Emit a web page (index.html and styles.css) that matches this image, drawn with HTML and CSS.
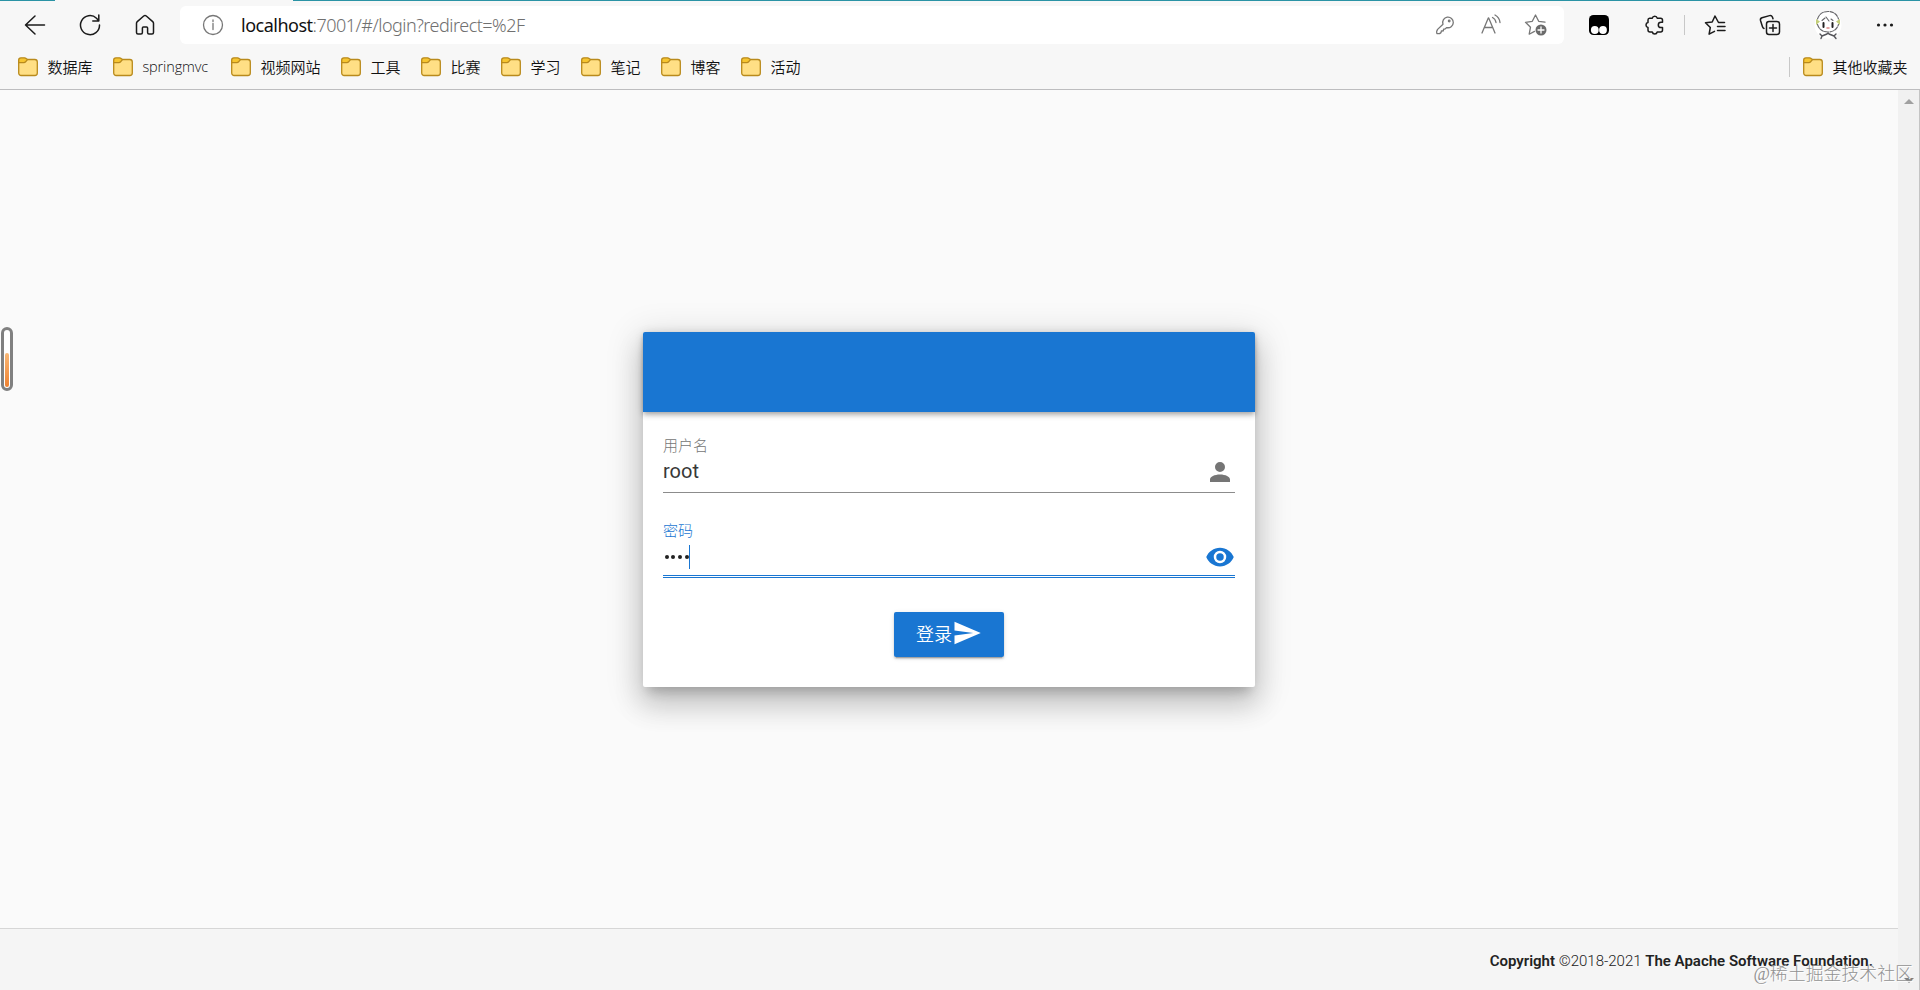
FILE: index.html
```html
<!DOCTYPE html>
<html lang="zh">
<head>
<meta charset="utf-8">
<title>Login</title>
<link rel="stylesheet" href="styles.css">
</head>
<body>
<svg class="defs" width="0" height="0">
  <symbol id="folder" viewBox="0 0 20 20">
    <rect x="0.7" y="2.5" width="18.6" height="16" rx="2.5" fill="#ffdf85" stroke="#b98a1c" stroke-width="1.3"/>
    <path d="M.7 5.600V3q0-2.200 2.200-2.200H6.500q1 0 1.600.700L9.400 2.600 7.600 4.800q-.700.800-1.700.800z" fill="#f6c531" stroke="#b98a1c" stroke-width="1.3"/>
  </symbol>
</svg>
<div class="chrome">
  <div class="tab-strip"><i class="active-tab"></i></div>
  <div class="toolbar">
    <svg class="back" width="22" height="22" viewBox="0 0 22 22"><path d="M20.500 11H1.500M11 2L1.500 11l9.500 9"/></svg>
    <svg class="reload" width="22" height="22" viewBox="0 0 22 22"><path d="M20.500 11A9.500 9.500 0 1 1 17.500 4.200L19.500 6.500M19.800 1v6h-6"/></svg>
    <svg class="home" width="22" height="22" viewBox="0 0 22 22"><path d="M2.500 9.300q0-1 .8-1.700L9.700 2q1.300-1 2.600 0l6.400 5.600q.8.700.8 1.700v9.200q0 1.500-1.500 1.500h-3q-1.400 0-1.400-1.500V14q0-1-1-1H9.400q-1 0-1 1v4.500Q8.400 20 7 20H4q-1.500 0-1.500-1.500z"/></svg>
    <div class="address">
      <svg class="info" width="22" height="22" viewBox="0 0 22 22"><circle cx="11" cy="11" r="9.500"/><path d="M11 9.500v6M11 6v1.500"/></svg>
      <div class="url"><b>localhost</b>:7001/#/login?redirect=%2F</div>
      <svg class="key" width="20" height="20" viewBox="0 0 20 20"><path d="M2.600 14.400L8 9.200A5.300 5.300 0 1 1 11.800 12.600L10 14 8.600 14.100 8.300 15.800 6.400 16 6 17.600 4.600 18.600H2.400Q1.700 18.600 1.700 17.600V16.300z"/><circle cx="14.200" cy="6" r=".8"/></svg>
      <svg class="read" width="22" height="22" viewBox="0 0 22 22"><path d="M2 19L8.300 4h.4L15 19M4.200 13.500h8.600M12.500 3.500q3 1.500 3.500 5M15 1q4.500 2.500 5 7.500"/></svg>
      <svg class="fav" width="24" height="24" viewBox="0 0 24 24"><path d="M21 9.200l-6.300-.9L11.500 2 8.300 8.300l-6.800 1 5 4.900-1.300 7 5.300-2.800"/><circle class="plus-bg" cx="17" cy="17" r="5.500"/><path class="plus" d="M17 14v6M14 17h6"/></svg>
    </div>
    <svg class="ext" width="20" height="20" viewBox="0 0 20 20"><rect width="20" height="20" rx="4.500"/><g class="eyes"><circle cx="5.800" cy="15" r="3.900"/><circle cx="14" cy="15" r="3.900"/></g></svg>
    <svg class="puzzle" width="22" height="22" viewBox="0 0 22 22"><path d="M5.500 4.200H8.300A2.500 2.500 0 0 1 13.200 4.200H16.500Q18.500 4.200 18.500 6.200V8.200H17A2.600 2.600 0 0 0 17 13.600H18.500V16Q18.500 18 16.500 18H13.200A2.500 2.500 0 0 1 8.300 18H6Q4 18 4 16V13.400A2.500 2.500 0 0 1 4 8.500V6Q4 4.200 5.500 4.200z"/></svg>
    <i class="divider"></i>
    <svg class="favorites" width="22" height="22" viewBox="0 0 22 22"><path d="M20.500 8.500h-6L11 2 8.200 8 1.500 8.800l4.800 4.700-1.200 6.700 5.400-2.900M13.500 12.500h7.500M13.500 16.500h7.500"/></svg>
    <svg class="collections" width="22" height="22" viewBox="0 0 22 22"><rect x="7.500" y="7.500" width="13" height="13" rx="2.500"/><path d="M14 10.500v7M10.500 14h7M5 14.500Q3.800 14 3.400 12.500L1.500 6.500Q1 4.500 3 3.800L10.500 1.600Q12.500 1 13.400 3L14 4.700"/></svg>
    <svg class="avatar" width="28" height="30" viewBox="0 0 28 30"><circle cx="14" cy="15" r="13.500" fill="#fff"/><g fill="none" stroke="#66666a" stroke-width="1.100"><path d="M3.500 9Q6 1.500 14 1.500T24.500 9M3.500 14.500Q6 22 14 22T24.500 14.500" stroke-dasharray="4 1.200"/><path d="M8 10.500l3-2.500M12 7l3 4M17 9l2 1.500"/></g><path d="M2 9l4 2.500L2 15zM26 9l-4 2.500 4 3.500z" fill="#c3ce79"/><path d="M9.500 13v4M18.500 13v4" stroke="#222" stroke-width="2"/><path d="M13 18h2" stroke="#d88"/><path d="M6 24l2 2 5-2 1-1 1 1 5 2 2-2M8 26l-1 2.500M20 26l2 2.500" fill="none" stroke="#55555a" stroke-width="1.400"/></svg>
    <svg class="more" width="18" height="6" viewBox="0 0 18 6"><circle cx="2.500" cy="3" r="1.600"/><circle cx="9" cy="3" r="1.600"/><circle cx="15.500" cy="3" r="1.600"/></svg>
  </div>
  <div class="bookmarks">
    <span class="bookmark"><svg><use href="#folder"/></svg>数据库</span>
    <span class="bookmark"><svg><use href="#folder"/></svg><span class="latin">springmvc</span></span>
    <span class="bookmark"><svg><use href="#folder"/></svg>视频网站</span>
    <span class="bookmark"><svg><use href="#folder"/></svg>工具</span>
    <span class="bookmark"><svg><use href="#folder"/></svg>比赛</span>
    <span class="bookmark"><svg><use href="#folder"/></svg>学习</span>
    <span class="bookmark"><svg><use href="#folder"/></svg>笔记</span>
    <span class="bookmark"><svg><use href="#folder"/></svg>博客</span>
    <span class="bookmark"><svg><use href="#folder"/></svg>活动</span>
    <span class="bookmark other"><svg><use href="#folder"/></svg>其他收藏夹</span>
  </div>
</div>
<div class="viewport">
  <div class="page">
    <main class="content">
      <section class="card">
        <header class="card-header"></header>
        <form class="form">
          <div class="field">
            <label>用户名</label>
            <div class="control"><span class="value">root</span>
              <svg width="30" height="30" viewBox="0 0 24 24"><path d="M12 4a4 4 0 1 1 0 8 4 4 0 0 1 0-8m0 10c4.420 0 8 1.790 8 4v2H4v-2c0-2.210 3.580-4 8-4z"/></svg>
            </div>
          </div>
          <div class="field focused">
            <label>密码</label>
            <div class="control"><span class="dots"><i></i><i></i><i></i><i></i></span><i class="caret"></i>
              <svg width="30" height="30" viewBox="0 0 24 24"><path d="M12 9a3 3 0 1 0 0 6 3 3 0 0 0 0-6m0 8a5 5 0 1 1 0-10 5 5 0 0 1 0 10m0-12.500C7 4.500 2.730 7.610 1 12c1.730 4.390 6 7.500 11 7.500s9.270-3.110 11-7.500c-1.730-4.390-6-7.500-11-7.500z"/></svg>
            </div>
          </div>
          <button class="submit" type="button">登录<svg width="30" height="30" viewBox="0 0 24 24"><path d="M2 21l21-9L2 3v7l15 2-15 2z"/></svg></button>
        </form>
      </section>
    </main>
    <footer class="footer"><strong>Copyright</strong>&nbsp;©2018-2021&nbsp;<strong>The Apache Software Foundation.</strong></footer>
  </div>
  <div class="scrollbar"><i class="up"></i><i class="down"></i></div>
  <div class="gauge"><i></i></div>
  <div class="watermark">@稀土掘金技术社区</div>
</div>
</body>
</html>
```
FILE: styles.css
```css
* { box-sizing: border-box; }
body {
  margin: 0;
  height: 990px;
  display: flex;
  flex-direction: column;
  overflow: hidden;
  background: #fafafa;
  font-family: Roboto, "Noto Sans CJK SC", sans-serif;
}
svg { display: block; flex: none; }
.defs { position: absolute; }

/* Browser chrome */
.chrome {
  height: 90px;
  flex: none;
  background: #f7f7f7;
  border-bottom: 1px solid #bdbdbf;
  font-family: "Open Sans", "Noto Sans CJK SC", sans-serif;
}
.tab-strip { height: 1px; background: #2a93a5; padding-left: 55px; }
.active-tab { display: block; width: 238px; height: 1px; background: #f7f7f7; }
.toolbar { height: 48px; display: flex; align-items: center; padding: 0 26px 0 24px; }
.toolbar svg { fill: none; stroke: #1b1b1b; stroke-width: 1.5; stroke-linecap: round; stroke-linejoin: round; }
.reload { margin-left: 33px; }
.home { margin-left: 33px; }
.address {
  width: 1385px;
  height: 38px;
  margin-left: 24px;
  padding: 0 16px 0 22px;
  display: flex;
  align-items: center;
  background: #fff;
  border-radius: 6px;
}
.toolbar .address svg { stroke: #777; stroke-width: 1.3; }
.url {
  margin-left: 17px;
  padding-bottom: 1px;
  flex: 1;
  font-family: "Noto Sans", sans-serif;
  font-weight: 300;
  font-size: 18px;
  letter-spacing: -0.5px;
  line-height: 24px;
  color: #707070;
  white-space: nowrap;
}
.url b { font-weight: 400; color: #111; }
.key { margin-right: 25px; }
.read { margin-right: 22px; }
.toolbar .plus-bg { fill: #6b6b6b; stroke: none; }
.toolbar .plus { stroke: #fff; }
.toolbar .ext { margin-left: 25px; fill: #000; stroke: none; }
.toolbar .ext .eyes { fill: #fff; }
.puzzle { margin-left: 35px; }
.divider { width: 1px; height: 20px; margin: 0 19px 0 18px; background: #c8c8c8; }
.collections { margin-left: 33px; }
.toolbar .avatar { margin-left: 33px; stroke: none; }
.toolbar .more { margin-left: 34px; fill: #1b1b1b; stroke: none; }
.bookmarks { height: 40px; display: flex; align-items: center; gap: 20px; padding: 0 12px 4px 18px; }
.bookmark { display: flex; align-items: center; gap: 9.500px; height: 24px; margin-right: .5px; font-size: 15px; font-weight: 350; line-height: 22px; color: #111; white-space: nowrap; }
.bookmark svg { width: 20px; height: 20px; }
.bookmark .latin { width: 68px; font-size: 14.500px; letter-spacing: -0.15px; }
.other { margin-left: auto; padding-left: 13px; height: 20px; border-left: 1px solid #c8c8c8; }

/* Page */
.viewport { flex: 1; position: relative; display: flex; min-height: 0; }
.page { flex: 1; display: flex; flex-direction: column; }
.content { flex: 1; display: flex; justify-content: center; align-items: center; background: #fafafa; }
.card {
  width: 612px;
  height: 355px;
  border-radius: 2px;
  background: #fff;
  box-shadow: 0 9px 11px -5px rgba(0,0,0,.2), 0 18px 28px 2px rgba(0,0,0,.14), 0 7px 34px 6px rgba(0,0,0,.12);
}
.card-header {
  height: 80px;
  border-radius: 2px 2px 0 0;
  background: #1976d2;
  box-shadow: 0 2px 4px -1px rgba(0,0,0,.2), 0 4px 5px rgba(0,0,0,.14), 0 1px 10px rgba(0,0,0,.12);
}
.form { padding: 25px 20px 0; display: flex; flex-direction: column; }
.field { height: 56px; border-bottom: 1px solid #8c8c8c; color: #757575; margin-bottom: 28px; }
.field label { display: block; font-size: 15px; font-weight: 300; line-height: 18px; height: 18px; }
.control { display: flex; align-items: center; height: 34px; }
.control svg { margin-left: auto; fill: currentColor; }
.value { font-size: 20px; color: #383838; padding-bottom: 2px; }
.focused { height: 57px; color: #1976d2; border-bottom: 3px double #1976d2; margin-bottom: 34px; padding-top: 1px; }
.dots { display: flex; gap: 2.700px; padding-left: 1.500px; }
.dots i { width: 4px; height: 4px; border-radius: 50%; background: #222; }
.caret { width: 1px; height: 24px; background: #1976d2; }
.submit {
  align-self: center;
  width: 110px;
  height: 45px;
  padding: 0 0 2px;
  border: 0;
  border-radius: 2px;
  display: flex;
  align-items: center;
  justify-content: center;
  background: #1976d2;
  color: #fff;
  font: 350 18px Roboto, "Noto Sans CJK SC", sans-serif;
  box-shadow: 0 3px 1px -2px rgba(0,0,0,.2), 0 2px 2px rgba(0,0,0,.14), 0 1px 5px rgba(0,0,0,.12);
}
.submit svg { fill: #fff; }
.footer {
  height: 62px;
  flex: none;
  padding: 22px 25px 0;
  border-top: 1px solid #d6d6d6;
  background: #f5f5f5;
  font-size: 15px;
  font-weight: 350;
  line-height: 20px;
  text-align: right;
  color: #222;
}
.footer strong { font-weight: 600; }

.scrollbar {
  width: 22px;
  display: flex;
  flex-direction: column;
  align-items: center;
  justify-content: space-between;
  padding: 9px 0 7px;
  background: #f1f1f1;
  border-right: 1px solid #c4c4c4;
}
.scrollbar i { border: 5px solid transparent; }
.scrollbar .up { border-top: 0; border-bottom-color: #a0a0a0; }
.scrollbar .down { border-bottom: 0; border-top-color: #808080; }

/* Floating overlays */
.gauge {
  position: absolute;
  left: 1px;
  top: 237px;
  width: 12px;
  height: 64px;
  padding: 0 1px 1px;
  display: flex;
  align-items: flex-end;
  border: 3px solid #808080;
  border-radius: 6px;
  background: #fff;
}
.gauge i { width: 4px; height: 34px; border-radius: 2px; background: linear-gradient(#f9b877, #ee8130); }
.watermark {
  position: absolute;
  right: 7px;
  bottom: 3px;
  font: 300 17.900px/26px "Liberation Serif", "Noto Sans CJK SC", serif;
  color: #929292;
  text-shadow: 1px 1px 0 #fff;
}
```
